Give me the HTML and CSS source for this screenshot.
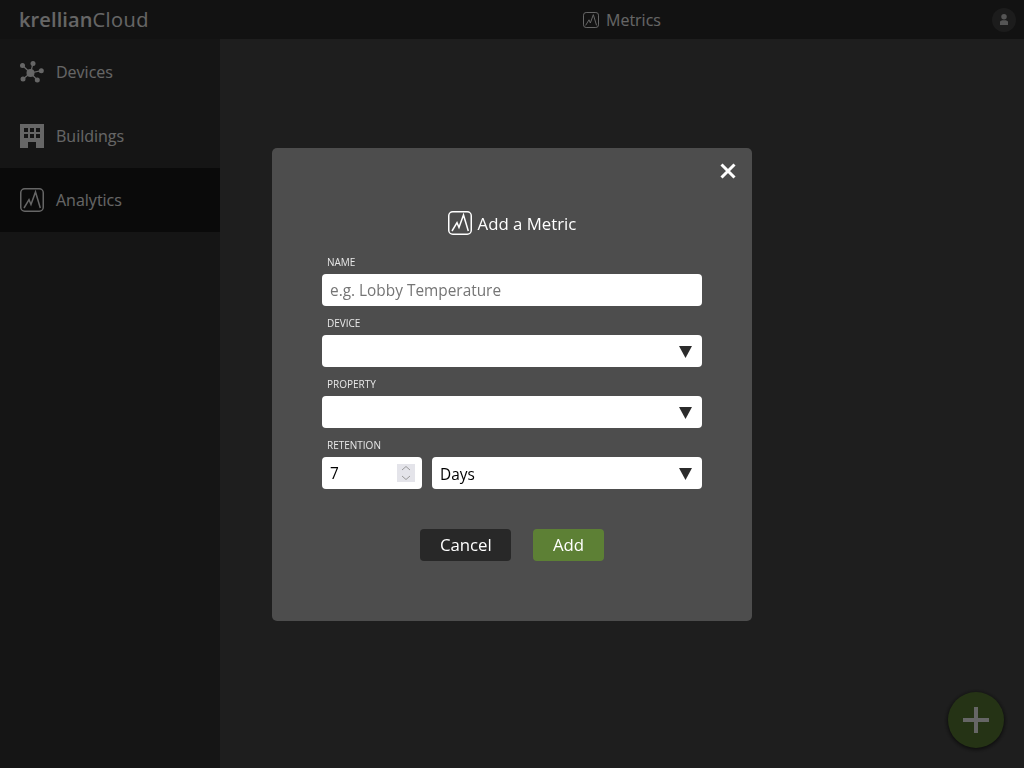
FILE: index.html
```html
<!DOCTYPE html>
<html lang="en">
<head>
<meta charset="utf-8">
<title>Metrics</title>
<link rel="stylesheet" href="styles.css">
</head>
<body>
<svg class="defs" width="0" height="0" aria-hidden="true">
  <symbol id="chart" viewBox="0 0 24 24">
    <rect x="0.75" y="0.75" width="22.5" height="22.5" rx="4" fill="none" stroke="currentColor" stroke-width="1.5"/>
    <path d="M4 20 L9 11.7 L11 16.5 L15.5 4 L20.3 20" fill="none" stroke="currentColor" stroke-width="1.5" stroke-linejoin="miter"/>
  </symbol>
  <symbol id="caret" viewBox="0 0 14 12" preserveAspectRatio="none">
    <path d="M0 0 H14 L7 12 Z" fill="currentColor"/>
  </symbol>
</svg>
<div class="app">
  <header class="topbar">
    <div class="logo"><b>krellian</b><span class="logo-light">Cloud</span></div>
    <div class="page-title"><svg class="title-icon"><use href="#chart"/></svg><span>Metrics</span></div>
    <div class="avatar">
      <svg viewBox="0 0 24 24" class="avatar-icon"><circle cx="12" cy="5.5" r="5.5" fill="currentColor"/><path d="M4 22 V16 C4 13.5 7 12.5 12 12.5 C17 12.5 20 13.5 20 16 V22 Z" fill="currentColor"/></svg>
    </div>
  </header>
  <div class="body">
    <nav class="sidebar">
      <a class="nav-item">
        <svg class="nav-icon" viewBox="0 0 24 24">
          <g stroke="currentColor" stroke-width="1.2"><path d="M10.5 13 L2.5 5.5 M10.5 13 L13 3.5 M10.5 13 L21.3 10.7 M10.5 13 L17.3 20 M10.5 13 L3 19"/></g>
          <g fill="currentColor"><circle cx="10.5" cy="13" r="4"/><circle cx="2.5" cy="5.5" r="2.5"/><circle cx="13" cy="3.5" r="2.5"/><circle cx="21.3" cy="10.7" r="2.5"/><circle cx="17.3" cy="20" r="2.5"/><circle cx="3" cy="19" r="2.5"/></g>
        </svg>
        <span>Devices</span>
      </a>
      <a class="nav-item">
        <svg class="nav-icon" viewBox="0 0 24 24">
          <path fill-rule="evenodd" fill="currentColor" d="M0 0 H24 V24 H16 V18 H8 V24 H0 Z M4 4 V8 H8 V4 Z M10 4 V8 H14 V4 Z M16 4 V8 H20 V4 Z M4 10 V14 H8 V10 Z M10 10 V14 H14 V10 Z M16 10 V14 H20 V10 Z"/>
        </svg>
        <span>Buildings</span>
      </a>
      <a class="nav-item active">
        <svg class="nav-icon"><use href="#chart"/></svg>
        <span>Analytics</span>
      </a>
    </nav>
    <main class="content"></main>
  </div>
  <button class="fab" aria-label="Add"><svg viewBox="0 0 26 26" class="fab-icon"><path d="M13 0 V26 M0 13 H26" stroke="currentColor" stroke-width="4"/></svg></button>
</div>
<div class="overlay">
  <form class="modal">
    <button type="button" class="close" aria-label="Close"><svg viewBox="0 0 16 16" class="close-icon"><path d="M1.5 1.5 L14.5 14.5 M14.5 1.5 L1.5 14.5" stroke="currentColor" stroke-width="3"/></svg></button>
    <h2 class="modal-title"><svg class="modal-icon"><use href="#chart"/></svg><span>Add a Metric</span></h2>
    <label class="field-label">NAME</label>
    <input class="control" type="text" placeholder="e.g. Lobby Temperature">
    <label class="field-label">DEVICE</label>
    <div class="select-wrap">
      <select class="control"><option></option></select>
      <svg class="caret"><use href="#caret"/></svg>
    </div>
    <label class="field-label">PROPERTY</label>
    <div class="select-wrap">
      <select class="control"><option></option></select>
      <svg class="caret"><use href="#caret"/></svg>
    </div>
    <label class="field-label">RETENTION</label>
    <div class="retention">
      <div class="number-wrap">
        <input class="control number" type="number" value="7">
        <span class="spin"><svg viewBox="0 0 18 18" class="spin-icon"><path d="M5 6 L9 2.5 L13 6 M5 12 L9 15.5 L13 12" fill="none" stroke="currentColor" stroke-width="1"/></svg></span>
      </div>
      <div class="select-wrap grow">
        <select class="control"><option>Days</option></select>
        <svg class="caret"><use href="#caret"/></svg>
      </div>
    </div>
    <div class="actions">
      <button type="button" class="btn cancel">Cancel</button>
      <button type="button" class="btn add">Add</button>
    </div>
  </form>
</div>
</body>
</html>
```
FILE: styles.css
```css
* { box-sizing: border-box; }
html, body { height: 100%; }
body {
  margin: 0;
  font-family: "Open Sans", "Noto Sans", sans-serif;
  font-size: 14px;
  background: #000;
  overflow: hidden;
}
.defs { position: absolute; }
.app {
  height: 768px;
  display: flex;
  flex-direction: column;
  opacity: .4;
  color: #fff;
}
.topbar {
  height: 39px;
  flex: none;
  background: #2d2d2d;
  display: grid;
  grid-template-columns: 564px auto 1fr;
  align-items: center;
  padding: 0 8px 0 19px;
}
.logo { font-size: 20px; line-height: 39px; }
.logo b { font-weight: 600; letter-spacing: .12px; }
.logo-light { letter-spacing: .4px; }
.page-title { display: flex; align-items: center; gap: 7px; font-size: 16px; }
.title-icon { width: 16px; height: 16px; }
.avatar {
  justify-self: end;
  width: 24px; height: 24px;
  border-radius: 50%;
  background: #464646;
  color: #d4d4d4;
  display: flex; align-items: center; justify-content: center;
}
.avatar-icon { width: 12px; height: 12px; }
.body { flex: 1; display: flex; min-height: 0; }
.sidebar { width: 220px; flex: none; background: #353535; padding-top: 1px; }
.nav-item {
  height: 64px;
  display: flex;
  align-items: center;
  gap: 12px;
  padding-left: 20px;
  font-size: 16px;
}
.nav-item.active { background: #191919; }
.nav-icon { width: 24px; height: 24px; flex: none; }
.content { flex: 1; background: #4d4d4d; }
.fab {
  position: absolute;
  right: 20px; bottom: 20px;
  width: 56px; height: 56px;
  padding: 0;
  border: 0;
  border-radius: 50%;
  background: #5d8035;
  color: #fff;
  box-shadow: 0 1px 5px rgba(0,0,0,.8);
  display: flex; align-items: center; justify-content: center;
}
.fab-icon { width: 26px; height: 26px; }
.overlay {
  position: fixed;
  inset: 0;
  display: flex;
  align-items: center;
  justify-content: center;
}
.modal {
  position: relative;
  width: 480px;
  height: 473px;
  background: #4d4d4d;
  border-radius: 5px;
  padding: 63px 50px 0;
  color: #fff;
  will-change: transform;
}
.close {
  position: absolute;
  top: 14px; right: 15px;
  width: 18px; height: 18px;
  padding: 1px;
  border: 0;
  background: none;
  color: #fff;
}
.close-icon { display: block; width: 16px; height: 16px; }
.modal-title {
  margin: 0 0 20px;
  height: 24px;
  display: flex;
  align-items: center;
  justify-content: center;
  gap: 6px;
  font-size: 16.8px;
  font-weight: 400;
}
.modal-icon { width: 24px; height: 24px; }
.field-label {
  display: block;
  height: 15px;
  margin: 0 0 4px;
  padding-left: 5px;
  font-size: 10px;
  line-height: 15px;
  color: #e8e8e8;
}
.control {
  display: block;
  width: 100%;
  height: 32px;
  margin: 0 0 10px;
  padding: 0 8px;
  border: 0;
  border-radius: 4px;
  background: #fff;
  color: #000;
  font-family: inherit;
  font-size: 15.4px;
  appearance: none;
  outline: none;
}
select.control { padding-top: 2px; }
.control::placeholder { color: #757575; }
.select-wrap { position: relative; }
.caret {
  position: absolute;
  right: 10px; top: 11px;
  width: 13px; height: 12px;
  color: #2b2b2b;
  pointer-events: none;
}
.retention { display: flex; gap: 10px; }
.number-wrap { position: relative; width: 100px; flex: none; }
.number { appearance: textfield; }
.number::-webkit-inner-spin-button { appearance: none; }
.spin {
  position: absolute;
  top: 7px; right: 7px;
  width: 18px; height: 18px;
  background: #e4e4ea;
  color: #9a9a9a;
}
.spin-icon { display: block; width: 18px; height: 18px; }
.grow { flex: 1; }
.actions { display: flex; justify-content: center; gap: 22px; margin-top: 30px; }
.btn {
  height: 32px;
  padding: 0 19.6px 2px;
  border: 0;
  border-radius: 4px;
  color: #fff;
  font-family: inherit;
  font-size: 16.8px;
}
.cancel { background: #282828; }
.add { background: #5d8035; }
```
